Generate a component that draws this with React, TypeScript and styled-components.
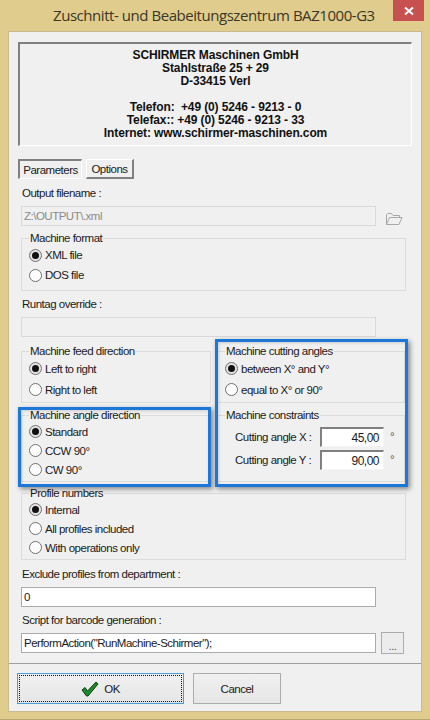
import styled, { createGlobalStyle } from 'styled-components';

const GlobalStyle = createGlobalStyle`
  html, body {
    margin: 0;
    padding: 0;
    background: #e0cd8e;
    overflow: hidden;
  }
  * {
    box-sizing: border-box;
  }
`;

const Frame = styled.div`
  width: 430px;
  height: 720px;
  display: flex;
  flex-direction: column;
  padding: 0 8px 7px;
  background: #e0cd8e;
  border-bottom: 1px solid #b5a673;
  font-family: 'Liberation Sans', Arial, sans-serif;
  font-size: 11.5px;
  letter-spacing: -0.5px;
  color: #1a1a1a;
`;

const TitleBar = styled.div`
  height: 31px;
  flex: none;
  display: flex;
  justify-content: space-between;
  align-items: flex-start;
  position: relative;
`;

const Title = styled.div`
  flex: 1;
  padding: 5px 0 0 45px;
  font-family: 'Open Sans', sans-serif;
  font-size: 15px;
  letter-spacing: -0.45px;
  line-height: 21px;
  white-space: nowrap;
  color: #3b3625;
`;

const CloseButton = styled.div`
  width: 31px;
  height: 21px;
  margin-right: -2px;
  background: #c75050;
  display: flex;
  align-items: center;
  justify-content: center;
`;

const Client = styled.div`
  flex: 1;
  display: flex;
  flex-direction: column;
  background: #f0f0f0;
  border: 1px solid #c7bb8f;
`;

const Body = styled.div`
  flex: 1;
  display: flex;
  flex-direction: column;
  padding: 0 15px 0 12px;
`;

const Header = styled.div`
  width: 394px;
  height: 104px;
  margin: 10px 0 0 -3px;
  padding-top: 5px;
  border: 2px solid;
  border-color: #808080 #fff #fff #808080;
  border-width: 2px 1px 1px 2px;
  text-align: center;
  font-weight: 700;
  font-size: 12px;
  line-height: 13px;
  letter-spacing: -0.12px;
  color: #111;
`;

const HeaderLine = styled.div`
  height: 13px;
  white-space: pre;
`;

const Tabs = styled.div`
  display: flex;
  gap: 4px;
  margin: 13px 0 0 -3px;
`;

const Tab = styled.div<{ $active?: boolean; $width: number }>`
  width: ${(p) => p.$width}px;
  height: 20px;
  display: flex;
  align-items: center;
  justify-content: center;
  border: 1px solid;
  border-width: ${(p) => (p.$active ? '2px 1px 1px 2px' : '1px 2px 2px 1px')};
  border-color: ${(p) => (p.$active ? '#808080 #fff #fff #808080' : '#fff #808080 #808080 #fff')};
`;

const Label = styled.div<{ $top: number }>`
  height: 13px;
  line-height: 13px;
  margin-top: ${(p) => p.$top}px;
  padding-left: 1px;
  white-space: nowrap;
`;

const FieldRow = styled.div`
  display: flex;
  align-items: center;
  gap: 5px;
  margin-top: 6px;
  height: 20px;
`;

const Field = styled.div<{ $disabled?: boolean }>`
  width: 355px;
  height: 20px;
  flex: none;
  padding: 0 2px;
  line-height: 18px;
  white-space: nowrap;
  background: ${(p) => (p.$disabled ? '#f0f0f0' : '#fff')};
  border: 1px solid ${(p) => (p.$disabled ? '#d9d9d9' : '#ababab')};
  color: ${(p) => (p.$disabled ? '#8a8a8a' : '#1a1a1a')};
`;

const FolderIcon = styled.svg`
  margin: 6px 0 0 4px;
  flex: none;
`;

const EllipsisButton = styled.div`
  width: 23px;
  height: 22px;
  flex: none;
  display: flex;
  align-items: center;
  justify-content: center;
  padding-top: 5px;
  background: #ececec;
  border: 1px solid #acacac;
  color: #555;
`;

const Group = styled.fieldset<{ $top: number; $height: number }>`
  margin: ${(p) => p.$top}px 0 0;
  padding: 0 0 0 7px;
  min-width: 0;
  height: ${(p) => p.$height}px;
  border: 1px solid #dcdcdc;
  display: flex;
  flex-direction: column;
`;

const GroupTitle = styled.legend`
  margin-left: 0;
  padding: 0 1px;
  height: 13px;
  line-height: 13px;
  white-space: nowrap;
`;

const RadioRow = styled.div<{ $height: number }>`
  height: ${(p) => p.$height}px;
  display: flex;
  align-items: center;
  gap: 3px;
  white-space: nowrap;
`;

const RadioMark = styled.span<{ $checked?: boolean }>`
  width: 13px;
  height: 13px;
  flex: none;
  border-radius: 50%;
  border: 1px solid #707070;
  background: ${(p) => (p.$checked ? '#e4e4e4' : '#fff')};
  display: flex;
  align-items: center;
  justify-content: center;
  &::after {
    content: '';
    width: 7px;
    height: 7px;
    border-radius: 50%;
    background: ${(p) => (p.$checked ? '#111' : 'transparent')};
  }
`;

const Columns = styled.div`
  display: grid;
  grid-template-columns: 190px 188px;
  column-gap: 6px;
  margin-top: 8px;
`;

const Column = styled.div`
  position: relative;
  display: flex;
  flex-direction: column;
`;

const HighlightSlot = styled.div`
  position: relative;
  margin-top: 6px;
`;

const Highlight = styled.div<{ $inset: string }>`
  position: absolute;
  inset: ${(p) => p.$inset};
  border: 3px solid #1b78d8;
  box-shadow: 2px 2px 5px rgba(0, 0, 0, 0.45), inset 1px 1px 3px rgba(0, 0, 0, 0.15);
  pointer-events: none;
`;

const AngleRows = styled.div`
  display: flex;
  flex-direction: column;
  gap: 3px;
  padding-top: 5px;
`;

const AngleRow = styled.div`
  display: flex;
  align-items: center;
  height: 20px;
  padding-left: 10px;
  white-space: nowrap;
`;

const AngleLabel = styled.span`
  width: 85px;
`;

const AngleInput = styled.div`
  width: 64px;
  height: 20px;
  padding-right: 4px;
  line-height: 18px;
  text-align: right;
  background: #fff;
  border: 1px solid;
  border-width: 2px 1px 1px 2px;
  border-color: #808080 #f4f4f4 #f4f4f4 #808080;
  font-size: 12px;
  letter-spacing: -0.5px;
`;

const Degree = styled.span`
  margin: -3px 0 0 6px;
  color: #555;
`;

const Footer = styled.div`
  flex: none;
  height: 48px;
  display: flex;
  gap: 9px;
  padding: 9px 0 0 8px;
  border-top: 1px solid #a0a0a0;
`;

const Button = styled.div<{ $width: number; $focused?: boolean }>`
  position: relative;
  width: ${(p) => p.$width}px;
  height: 31px;
  display: flex;
  align-items: center;
  justify-content: center;
  gap: 5px;
  font-size: 11.5px;
  background: linear-gradient(#f0f0f0, #e6e6e6);
  border: 1px solid ${(p) => (p.$focused ? '#4a9ad8' : '#acacac')};
`;

const FocusRing = styled.span`
  position: absolute;
  inset: 1px;
  border: 1px dotted #111;
`;

const formatRadios = [
  { label: 'XML file', checked: true },
  { label: 'DOS file' },
];
const feedRadios = [
  { label: 'Left to right', checked: true },
  { label: 'Right to left' },
];
const cuttingRadios = [
  { label: 'between X° and Y°', checked: true },
  { label: 'equal to X° or 90°' },
];
const angleRadios = [
  { label: 'Standard', checked: true },
  { label: 'CCW 90°' },
  { label: 'CW 90°' },
];
const profileRadios = [
  { label: 'Internal', checked: true },
  { label: 'All profiles included' },
  { label: 'With operations only' },
];

const headerLines = [
  'SCHIRMER Maschinen GmbH',
  'Stahlstraße 25 + 29',
  'D-33415 Verl',
  ' ',
  'Telefon:  +49 (0) 5246 - 9213 - 0',
  'Telefax:: +49 (0) 5246 - 9213 - 33',
  'Internet: www.schirmer-maschinen.com',
];

type RadioItem = { label: string; checked?: boolean };

const Radios = ({ items, height }: { items: RadioItem[]; height: number }) => (
  <>
    {items.map((item) => (
      <RadioRow key={item.label} $height={height}>
        <RadioMark $checked={item.checked} />
        {item.label}
      </RadioRow>
    ))}
  </>
);

const App = () => {
  return (
    <Frame>
      <GlobalStyle />
      <TitleBar>
        <Title>Zuschnitt- und Beabeitungszentrum BAZ1000-G3</Title>
        <CloseButton>
          <svg width="10" height="10" viewBox="0 0 10 10">
            <path d="M1 1.5 L9 8.5 M9 1.5 L1 8.5" stroke="#fff" strokeWidth="2" />
          </svg>
        </CloseButton>
      </TitleBar>
      <Client>
        <Body>
          <Header>
            {headerLines.map((line, i) => (
              <HeaderLine key={i}>{line}</HeaderLine>
            ))}
          </Header>
          <Tabs>
            <Tab $active $width={64}>Parameters</Tab>
            <Tab $width={48}>Options</Tab>
          </Tabs>
          <Label $top={8}>Output filename :</Label>
          <FieldRow>
            <Field $disabled>Z:\OUTPUT\.xml</Field>
            <FolderIcon width="18" height="14" viewBox="0 0 18 14" fill="none" stroke="#a8a8a8">
              <path d="M1.5 12.5 V2.5 L2.5 1.5 H6.5 L8 3.5 H14.5 V5.5" />
              <path d="M1.5 12.5 L4.5 5.5 H17 L14 12.5 Z" />
            </FolderIcon>
          </FieldRow>
          <Group $top={6} $height={59}>
            <GroupTitle>Machine format</GroupTitle>
            <Radios items={formatRadios} height={20} />
          </Group>
          <Label $top={7}>Runtag override :</Label>
          <FieldRow>
            <Field $disabled />
          </FieldRow>
          <Columns>
            <Column>
              <Group $top={0} $height={58}>
                <GroupTitle>Machine feed direction</GroupTitle>
                <Radios items={feedRadios} height={21} />
              </Group>
              <HighlightSlot>
                <Group $top={0} $height={73}>
                  <GroupTitle>Machine angle direction</GroupTitle>
                  <Radios items={angleRadios} height={19} />
                </Group>
                <Highlight $inset="-2px 0 -5px -3px" />
              </HighlightSlot>
            </Column>
            <Column>
              <Group $top={0} $height={58}>
                <GroupTitle>Machine cutting angles</GroupTitle>
                <Radios items={cuttingRadios} height={21} />
              </Group>
              <Group $top={6} $height={73}>
                <GroupTitle>Machine constraints</GroupTitle>
                <AngleRows>
                  <AngleRow>
                    <AngleLabel>Cutting angle X :</AngleLabel>
                    <AngleInput>45,00</AngleInput>
                    <Degree>°</Degree>
                  </AngleRow>
                  <AngleRow>
                    <AngleLabel>Cutting angle Y :</AngleLabel>
                    <AngleInput>90,00</AngleInput>
                    <Degree>°</Degree>
                  </AngleRow>
                </AngleRows>
              </Group>
              <Highlight $inset="-6px -3px -5px -2px" />
            </Column>
          </Columns>
          <Group $top={5} $height={73}>
            <GroupTitle>Profile numbers</GroupTitle>
            <Radios items={profileRadios} height={19} />
          </Group>
          <Label $top={8}>Exclude profiles from department :</Label>
          <FieldRow>
            <Field>0</Field>
          </FieldRow>
          <Label $top={7}>Script for barcode generation :</Label>
          <FieldRow>
            <Field>PerformAction("RunMachine-Schirmer");</Field>
            <EllipsisButton>...</EllipsisButton>
          </FieldRow>
        </Body>
        <Footer>
          <Button $width={167} $focused>
            <FocusRing />
            <svg width="18" height="16" viewBox="0 0 18 16">
              <path d="M1 9 L4 6.5 L6.5 10 L15 1 L17 3 L7 15 L5.5 15 Z" fill="#1c8a2c" stroke="#0b3f17" strokeWidth="1" />
            </svg>
            OK
          </Button>
          <Button $width={88}>Cancel</Button>
        </Footer>
      </Client>
    </Frame>
  );
};

export default App;
